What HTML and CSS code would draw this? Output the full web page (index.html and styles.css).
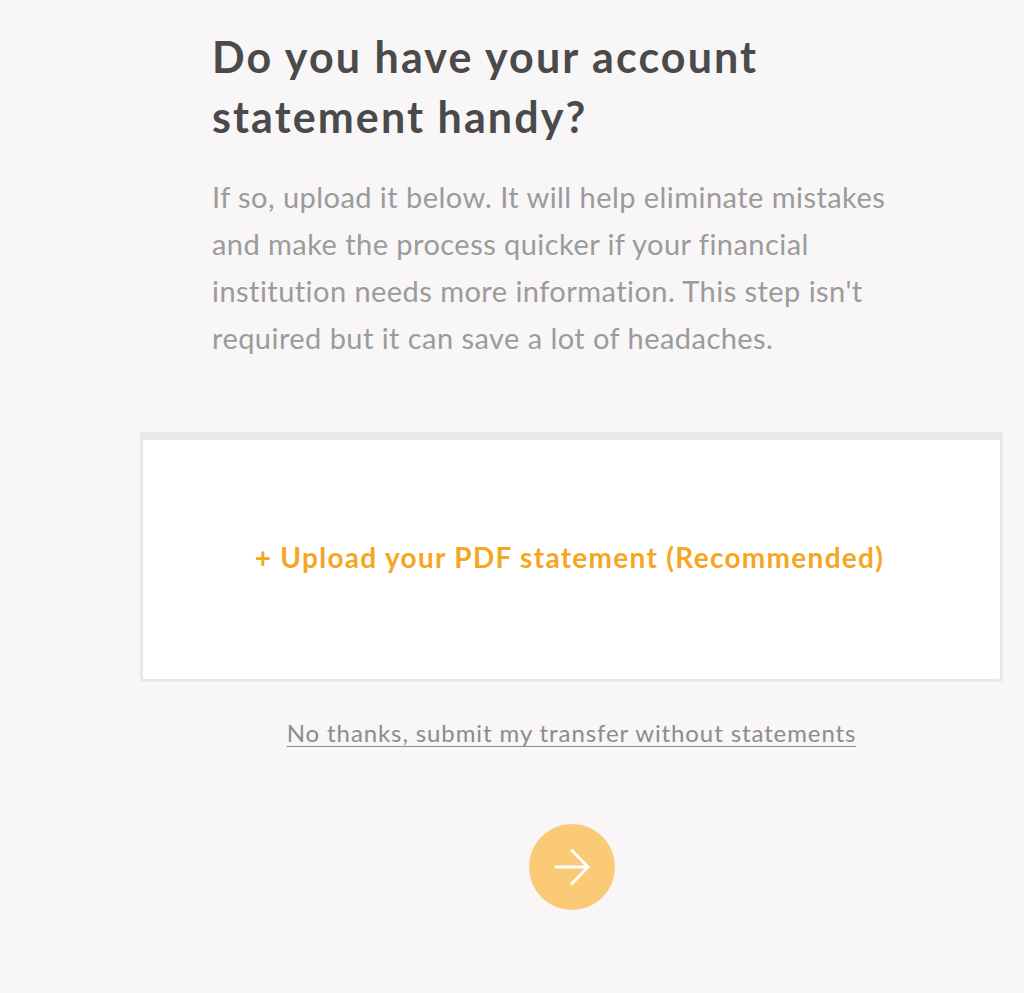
FILE: index.html
```html
<!DOCTYPE html>
<html lang="en">
<head>
<meta charset="utf-8">
<title>Account statement</title>
<link rel="stylesheet" href="styles.css">
</head>
<body>
<main class="page">
  <section class="intro">
    <h1 class="title">Do you have your account statement handy?</h1>
    <p class="lead">If so, upload it below. It will help eliminate mistakes and make the process quicker if your financial institution needs more information. This step isn't required but it can save a lot of headaches.</p>
  </section>
  <div class="upload">
    <div class="upload-inner">
      <span class="upload-label">+ Upload your PDF statement (Recommended)</span>
    </div>
  </div>
  <a class="skip" href="#">No thanks, submit my transfer without statements</a>
  <button class="next" type="button" aria-label="Next">
    <svg width="40" height="40" viewBox="0 0 40 40" fill="none" stroke="#fff" stroke-width="3" stroke-linecap="round" stroke-linejoin="round">
      <path d="M4 20 H36"/>
      <path d="M20 3.5 L36 20 L20 36.5"/>
    </svg>
  </button>
</main>
</body>
</html>
```
FILE: styles.css
```css
html, body {
  margin: 0;
  padding: 0;
}
body {
  background: #f8f6f7;
  font-family: Lato, "Liberation Sans", sans-serif;
}
.page {
  width: 863px;
  margin-left: 140px;
  display: flex;
  flex-direction: column;
  align-items: center;
}
.intro {
  align-self: stretch;
  padding: 0 72px;
}
.title {
  margin: 27px 0 0;
  max-width: 700px;
  font-size: 43px;
  line-height: 60px;
  font-weight: 700;
  color: #4a4a4a;
  letter-spacing: 2.1px;
}
.lead {
  margin: 26px 0 0;
  max-width: 705px;
  font-size: 29px;
  line-height: 47px;
  color: #9b9b9b;
  font-weight: 400;
  letter-spacing: 0.45px;
}
.upload {
  align-self: stretch;
  margin-top: 71px;
  height: 250px;
  box-sizing: border-box;
  background: #e9e9e9;
  padding: 8px 3px 3px;
  border-radius: 0 0 4px 4px;
}
.upload-inner {
  height: 100%;
  background: #fff;
  border-radius: 0 0 3px 3px;
  display: flex;
  align-items: center;
  justify-content: center;
  box-sizing: border-box;
  padding-bottom: 5px;
}
.upload-label {
  color: #f5a623;
  font-size: 28px;
  font-weight: 700;
  letter-spacing: 1.3px;
  margin-right: 4px;
}
.skip {
  margin-top: 36px;
  color: #8c8c8c;
  font-size: 24px;
  letter-spacing: 0.9px;
  text-decoration: underline;
  text-underline-offset: 4px;
  text-decoration-thickness: 1px;
}
.next {
  margin-top: 77px;
  width: 86px;
  height: 86px;
  border-radius: 50%;
  border: 0;
  padding: 0;
  background: #fbca76;
  display: flex;
  align-items: center;
  justify-content: center;
  cursor: pointer;
}
.next svg {
  width: 40px;
  height: 40px;
}
```
